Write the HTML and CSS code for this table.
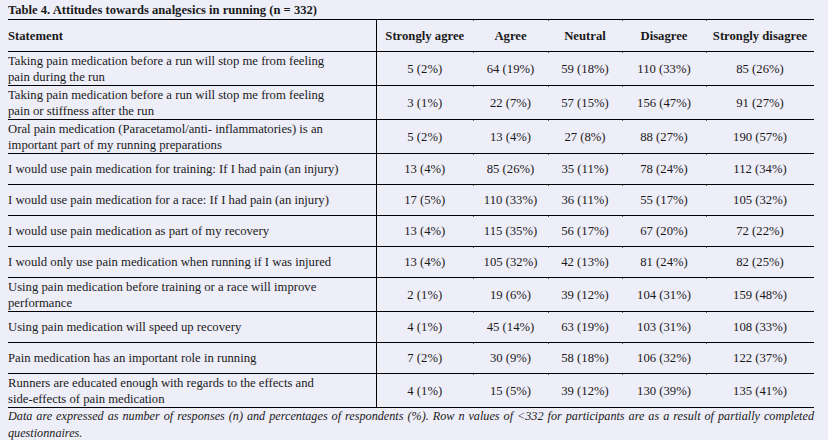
FILE: index.html
```html
<!DOCTYPE html>
<html lang="en">
<head>
<meta charset="utf-8">
<title>Table 4. Attitudes towards analgesics in running</title>
<link rel="stylesheet" href="styles.css">
</head>
<body>
<div class="page">
  <div class="caption">Table 4. Attitudes towards analgesics in running (n = 332)</div>
  <table class="data">
    <colgroup>
      <col class="c-stmt"><col class="c-sa"><col class="c-a"><col class="c-n"><col class="c-d"><col class="c-sd">
    </colgroup>
    <thead>
      <tr class="head">
        <th class="stmt">Statement</th>
        <th class="num">Strongly agree</th>
        <th class="num">Agree</th>
        <th class="num">Neutral</th>
        <th class="num">Disagree</th>
        <th class="num">Strongly disagree</th>
      </tr>
    </thead>
    <tbody>
      <tr class="two">
        <td class="stmt">Taking pain medication before a run will stop me from feeling<br>pain during the run</td>
        <td class="num">5 (2%)</td><td class="num">64 (19%)</td><td class="num">59 (18%)</td><td class="num">110 (33%)</td><td class="num">85 (26%)</td>
      </tr>
      <tr class="two">
        <td class="stmt">Taking pain medication before a run will stop me from feeling<br>pain or stiffness after the run</td>
        <td class="num">3 (1%)</td><td class="num">22 (7%)</td><td class="num">57 (15%)</td><td class="num">156 (47%)</td><td class="num">91 (27%)</td>
      </tr>
      <tr class="two">
        <td class="stmt">Oral pain medication (Paracetamol/anti- inflammatories) is an<br>important part of my running preparations</td>
        <td class="num">5 (2%)</td><td class="num">13 (4%)</td><td class="num">27 (8%)</td><td class="num">88 (27%)</td><td class="num">190 (57%)</td>
      </tr>
      <tr class="one">
        <td class="stmt">I would use pain medication for training: If I had pain (an injury)</td>
        <td class="num">13 (4%)</td><td class="num">85 (26%)</td><td class="num">35 (11%)</td><td class="num">78 (24%)</td><td class="num">112 (34%)</td>
      </tr>
      <tr class="one">
        <td class="stmt">I would use pain medication for a race: If I had pain (an injury)</td>
        <td class="num">17 (5%)</td><td class="num">110 (33%)</td><td class="num">36 (11%)</td><td class="num">55 (17%)</td><td class="num">105 (32%)</td>
      </tr>
      <tr class="one">
        <td class="stmt">I would use pain medication as part of my recovery</td>
        <td class="num">13 (4%)</td><td class="num">115 (35%)</td><td class="num">56 (17%)</td><td class="num">67 (20%)</td><td class="num">72 (22%)</td>
      </tr>
      <tr class="one">
        <td class="stmt">I would only use pain medication when running if I was injured</td>
        <td class="num">13 (4%)</td><td class="num">105 (32%)</td><td class="num">42 (13%)</td><td class="num">81 (24%)</td><td class="num">82 (25%)</td>
      </tr>
      <tr class="two">
        <td class="stmt">Using pain medication before training or a race will improve<br>performance</td>
        <td class="num">2 (1%)</td><td class="num">19 (6%)</td><td class="num">39 (12%)</td><td class="num">104 (31%)</td><td class="num">159 (48%)</td>
      </tr>
      <tr class="one">
        <td class="stmt">Using pain medication will speed up recovery</td>
        <td class="num">4 (1%)</td><td class="num">45 (14%)</td><td class="num">63 (19%)</td><td class="num">103 (31%)</td><td class="num">108 (33%)</td>
      </tr>
      <tr class="one">
        <td class="stmt">Pain medication has an important role in running</td>
        <td class="num">7 (2%)</td><td class="num">30 (9%)</td><td class="num">58 (18%)</td><td class="num">106 (32%)</td><td class="num">122 (37%)</td>
      </tr>
      <tr class="two">
        <td class="stmt">Runners are educated enough with regards to the effects and<br>side-effects of pain medication</td>
        <td class="num">4 (1%)</td><td class="num">15 (5%)</td><td class="num">39 (12%)</td><td class="num">130 (39%)</td><td class="num">135 (41%)</td>
      </tr>
    </tbody>
  </table>
  <p class="note">Data are expressed as number of responses (n) and percentages of respondents (%). Row n values of &lt;332 for participants are as a result of partially completed questionnaires.</p>
</div>
</body>
</html>
```

FILE: styles.css
```css
html, body {
  margin: 0;
  padding: 0;
  background: #eeeef8;
}

body {
  font-family: "Liberation Serif", "Times New Roman", serif;
  font-size: 12.7px;
  color: #1a1a1a;
}

.page {
  padding: 2px 14px 0 8px;
  width: 806px;
}

.caption {
  font-weight: bold;
  font-size: 12.6px;
  line-height: 17px;
  height: 17px;
}

.data {
  width: 806px;
  border-collapse: collapse;
  table-layout: fixed;
  border-top: 1px solid #000;
  border-bottom: 1px solid #000;
}

.c-stmt { width: 368px; }
.c-sa { width: 97px; }
.c-a { width: 75px; }
.c-n { width: 74px; }
.c-d { width: 84px; }
.c-sd { width: 108px; }

.data th,
.data td {
  padding: 0;
  line-height: 16px;
  vertical-align: middle;
  border-bottom: 1px solid #000;
}

.data th {
  font-weight: bold;
}

.data .stmt {
  text-align: left;
  border-right: 1px solid #000;
}

.data .num {
  text-align: center;
  position: relative;
}

.data .num + .num::before {
  content: "";
  position: absolute;
  left: 0;
  top: 0;
  width: 1px;
  height: 1px;
  background: #555;
}

.head th { height: 31px; }
.two td { height: 33px; }
.one td { height: 30px; }

.note {
  margin: 0;
  font-size: 12.2px;
  font-style: italic;
  line-height: 17px;
  text-align: justify;
}
```
